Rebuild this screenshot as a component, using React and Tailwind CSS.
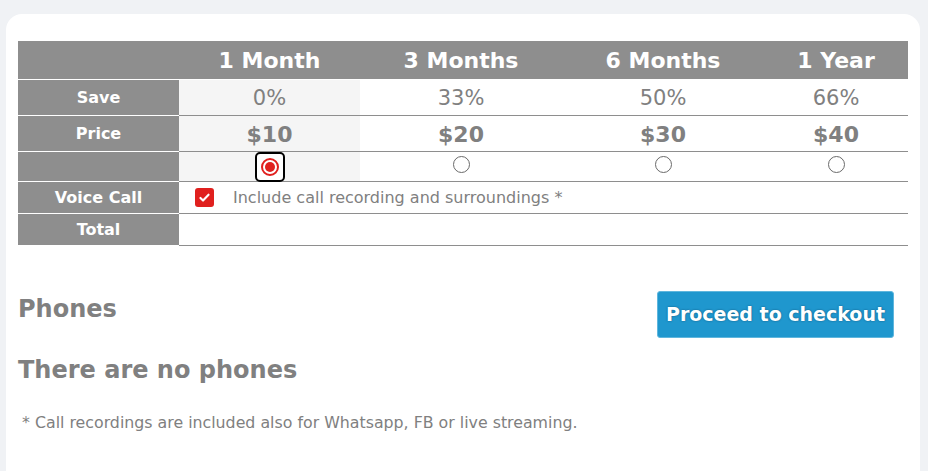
import React from "react";

const plans = [
  { name: "1 Month", save: "0%", price: "$10", w: "w-[181px]", active: true },
  { name: "3 Months", save: "33%", price: "$20", w: "w-[202px]" },
  { name: "6 Months", save: "50%", price: "$30", w: "w-[202px]" },
  { name: "1 Year", save: "66%", price: "$40", w: "flex-1" },
];

const Label = ({ children, h }) => (
  <div className={`w-[161px] shrink-0 bg-[#8e8e8e] border-b border-white text-white font-bold text-[16px] flex items-center justify-center ${h}`}>
    {children}
  </div>
);

const Radio = ({ checked }) =>
  checked ? (
    <span className="w-[30px] h-[30px] rounded-[5px] border-[2px] border-black flex items-center justify-center bg-white">
      <span className="w-[18px] h-[18px] rounded-full border-[2px] border-[#e0201e] flex items-center justify-center">
        <span className="w-[10px] h-[10px] rounded-full bg-[#e0201e]" />
      </span>
    </span>
  ) : (
    <span className="w-[17px] h-[17px] mb-[5px] rounded-full border border-[#6a6a6a] bg-white" />
  );

export default function App() {
  return (
    <div className="min-h-[471px] bg-[#f0f2f5] pt-[14px] pl-[6px] pr-[8px] font-['DejaVu_Sans',sans-serif] text-[#808080]">
      <div className="bg-white rounded-t-[16px] px-[12px] pt-[27px] pb-[40px]">
        {/* Pricing table */}
        <div className="w-[890px]">
          {/* Header */}
          <div className="flex h-[39px] bg-[#8e8e8e] border-b border-white text-white font-bold text-[22px]">
            <div className="w-[161px] shrink-0" />
            {plans.map((p) => (
              <div key={p.name} className={`${p.w} flex items-center justify-center`}>
                {p.name}
              </div>
            ))}
          </div>

          {/* Save */}
          <div className="flex">
            <Label h="h-[36px]">Save</Label>
            {plans.map((p) => (
              <div
                key={p.name}
                className={`${p.w} h-[36px] border-b border-[#8e8e8e] flex items-center justify-center text-[21px] pt-[2px] ${p.active ? "bg-[#f5f5f5]" : ""}`}
              >
                {p.save}
              </div>
            ))}
          </div>

          {/* Price */}
          <div className="flex">
            <Label h="h-[36px]">Price</Label>
            {plans.map((p) => (
              <div
                key={p.name}
                className={`${p.w} h-[36px] border-b border-[#8e8e8e] flex items-center justify-center text-[22px] font-bold pt-[2px] ${p.active ? "bg-[#f5f5f5]" : ""}`}
              >
                {p.price}
              </div>
            ))}
          </div>

          {/* Radio */}
          <div className="flex">
            <Label h="h-[30px]" />
            {plans.map((p) => (
              <div
                key={p.name}
                className={`${p.w} h-[30px] border-b border-[#8e8e8e] flex items-center justify-center ${p.active ? "bg-[#f5f5f5]" : ""}`}
              >
                <Radio checked={p.active} />
              </div>
            ))}
          </div>

          {/* Voice call */}
          <div className="flex">
            <Label h="h-[32px]">Voice Call</Label>
            <div className="flex-1 h-[32px] border-b border-[#8e8e8e] flex items-center pl-[16px] gap-[19px] text-[16px]">
              <span className="w-[19px] h-[19px] rounded-[3px] bg-[#e0201e] flex items-center justify-center">
                <svg viewBox="0 0 16 16" className="w-[13px] h-[13px]" fill="none" stroke="white" strokeWidth="2.6" strokeLinecap="round" strokeLinejoin="round">
                  <path d="M3 8.5l3.2 3.2L13 4.5" />
                </svg>
              </span>
              <span>Include call recording and surroundings *</span>
            </div>
          </div>

          {/* Total */}
          <div className="flex">
            <Label h="h-[32px]">Total</Label>
            <div className="flex-1 h-[32px] border-b border-[#8e8e8e]" />
          </div>
        </div>

        {/* Phones */}
        <div className="flex items-start justify-between mt-[45px] pr-[14px]">
          <h2 className="text-[24px] font-bold mt-[0px]">Phones</h2>
          <button className="h-[47px] w-[237px] bg-[#1f97ce] rounded-[3px] border border-[#5fb6dd] text-white font-bold text-[19px] [text-shadow:0_0_2px_rgba(0,40,70,0.6)]">
            Proceed to checkout
          </button>
        </div>

        <h2 className="text-[24px] font-bold mt-[14px]">There are no phones</h2>

        <p className="text-[15.8px] mt-[23px] pl-[4px]">
          * Call recordings are included also for Whatsapp, FB or live streaming.
        </p>
      </div>
    </div>
  );
}
